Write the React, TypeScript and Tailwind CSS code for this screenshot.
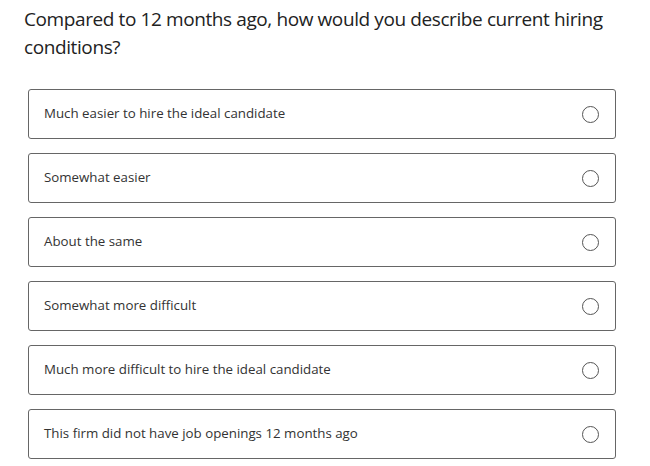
const OPTIONS = [
  "Much easier to hire the ideal candidate",
  "Somewhat easier",
  "About the same",
  "Somewhat more difficult",
  "Much more difficult to hire the ideal candidate",
  "This firm did not have job openings 12 months ago",
];

export default function App() {
  return (
    <div className="w-[650px] h-[466px] bg-white overflow-hidden font-['Open_Sans',sans-serif]">
      <h1 className="pl-[24px] pt-[5px] pr-[30px] text-[19px] tracking-[-0.4px] leading-[28px] text-[#222] font-normal">
        Compared to 12 months ago, how would you describe current hiring conditions?
      </h1>
      <div className="mt-[28px] ml-[28px] w-[588px] flex flex-col gap-[14px]">
        {OPTIONS.map((o) => (
          <label
            key={o}
            className="h-[50px] flex items-center justify-between pl-[15px] pr-[16px] border-[1.5px] border-[#666] rounded-[3px] cursor-pointer"
          >
            <span className="text-[13.3px] text-[#333]">{o}</span>
            <span className="w-[17px] h-[17px] rounded-full border-[1.5px] border-[#555]" />
          </label>
        ))}
      </div>
    </div>
  );
}
